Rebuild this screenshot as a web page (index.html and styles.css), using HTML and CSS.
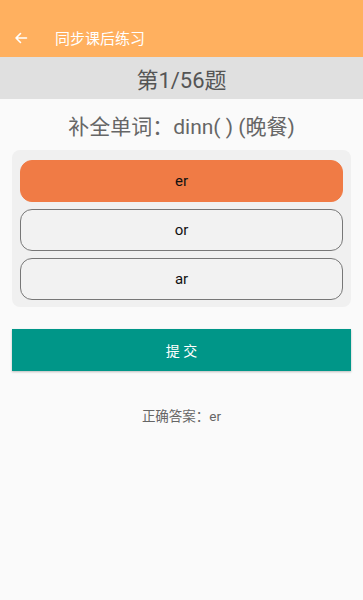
FILE: index.html
```html
<!DOCTYPE html>
<html lang="zh">

<head>
  <meta charset="UTF-8">
  <meta name="viewport" content="width=device-width, initial-scale=1.0">
  <title>同步课后练习</title>
  <link rel="stylesheet" href="styles.css">
</head>

<body>
  <header class="toolbar">
    <span class="back">
      <svg width="14" height="14" viewBox="0 0 14 14">
        <path d="M12.5 7H2M6.5 2.5L2 7l4.5 4.5" fill="none" stroke="#fff" stroke-width="1.6" stroke-linecap="round" stroke-linejoin="round"/>
      </svg>
    </span>
    <span class="toolbar-title">同步课后练习</span>
  </header>

  <div class="counter">第1/56题</div>

  <main>
    <h2 class="question">补全单词：dinn( ) (晚餐)</h2>

    <!-- answer options -->
    <section class="options">
      <div class="option selected">er</div>
      <div class="option">or</div>
      <div class="option">ar</div>
    </section>

    <button class="submit">提 交</button>

    <p class="answer">正确答案：er</p>
  </main>
</body>

</html>
```

FILE: styles.css
```css
/* Basic styling */
body {
  margin: 0;
  font-family: Roboto, "Noto Sans CJK SC", sans-serif;
  background-color: #fafafa;
  color: #333;
}

.toolbar {
  height: 57px;
  background-color: #ffb05f;
  color: #fff;
  display: flex;
  align-items: center;
  padding: 18px 0 0 14px;
  box-sizing: border-box;
}

.back {
  display: flex;
  width: 14px;
  height: 14px;
}

.toolbar-title {
  margin-left: 27px;
  font-size: 15px;
}

.counter {
  height: 42px;
  background-color: #e0e0e0;
  display: flex;
  align-items: center;
  justify-content: center;
  font-size: 22px;
  color: #555;
}

main {
  padding: 0 12px;
}

.question {
  margin: 0;
  height: 51px;
  display: flex;
  align-items: center;
  justify-content: center;
  font-weight: normal;
  font-size: 21px;
  color: #666;
}

.options {
  background-color: #f0f0f0;
  border-radius: 8px;
  padding: 10px 8px 7px;
  display: flex;
  flex-direction: column;
  gap: 7px;
}

.option {
  box-sizing: border-box;
  height: 42px;
  border: 1px solid #777;
  border-radius: 12px;
  background-color: #f2f2f2;
  display: flex;
  align-items: center;
  justify-content: center;
  font-size: 15px;
  color: #111;
}

.option.selected {
  background-color: #f07b45;
  border-color: #f07b45;
}

.submit {
  display: block;
  width: 100%;
  height: 42px;
  margin-top: 22px;
  border: none;
  background-color: #009688;
  color: #fff;
  font-family: inherit;
  font-size: 14px;
  box-shadow: 0 1px 2px rgba(0, 0, 0, 0.25);
}

.answer {
  margin: 34px 0 0;
  text-align: center;
  font-size: 13.5px;
  color: #666;
}
```
